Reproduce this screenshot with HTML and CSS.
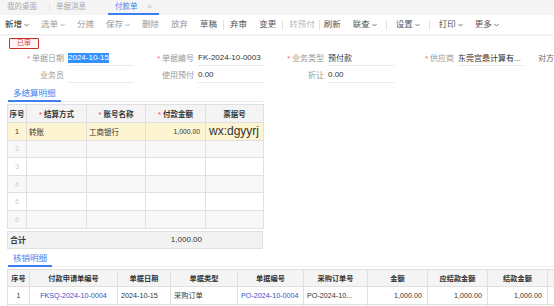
FILE: index.html
```html
<!DOCTYPE html>
<html lang="zh-CN">
<head>
    <meta charset="UTF-8">
    <meta name="viewport" content="width=device-width, initial-scale=1.0">
    <title>付款单</title>
    <link rel="stylesheet" href="styles.css">
</head>
<body>
    <div class="tabs">
        <div class="tab first">我的桌面</div>
        <span class="tab-sep"></span>
        <div class="tab">单据消息</div>
        <div class="tab active">付款单<span class="close">×</span></div>
    </div>

    <div class="toolbar">
        <div class="tool main">新增<svg class="arrow" width="5" height="4" viewBox="0 0 5 4"><polyline points="0.5,1 2.5,3 4.5,1"/></svg></div>
        <div class="tool off">选单<svg class="arrow" width="5" height="4" viewBox="0 0 5 4"><polyline points="0.5,1 2.5,3 4.5,1"/></svg></div>
        <div class="tool off">分摊</div>
        <div class="tool off">保存<svg class="arrow" width="5" height="4" viewBox="0 0 5 4"><polyline points="0.5,1 2.5,3 4.5,1"/></svg></div>
        <div class="tool off">删除</div>
        <div class="tool off">放弃</div>
        <div class="tool">草稿</div>
        <span class="sep"></span>
        <div class="tool">弃审</div>
        <div class="tool">变更</div>
        <span class="sep"></span>
        <div class="tool dim">转预付</div>
        <span class="sep tight"></span>
        <div class="tool">刷新</div>
        <div class="tool">联查<svg class="arrow" width="5" height="4" viewBox="0 0 5 4"><polyline points="0.5,1 2.5,3 4.5,1"/></svg></div>
        <span class="sep wide"></span>
        <div class="tool">设置<svg class="arrow" width="5" height="4" viewBox="0 0 5 4"><polyline points="0.5,1 2.5,3 4.5,1"/></svg></div>
        <span class="sep wide"></span>
        <div class="tool">打印<svg class="arrow" width="5" height="4" viewBox="0 0 5 4"><polyline points="0.5,1 2.5,3 4.5,1"/></svg></div>
        <div class="tool">更多<svg class="arrow" width="5" height="4" viewBox="0 0 5 4"><polyline points="0.5,1 2.5,3 4.5,1"/></svg></div>
    </div>

    <div class="status">
        <span class="stamp">已审</span>
    </div>

    <div class="form">
        <div class="form-row">
            <div class="field"><span class="label"><i class="req">*</i>单据日期</span><span class="value"><span class="sel">2024-10-15</span></span></div>
            <div class="field"><span class="label"><i class="req">*</i>单据编号</span><span class="value">FK-2024-10-0003</span></div>
            <div class="field"><span class="label"><i class="req">*</i>业务类型</span><span class="value">预付款</span></div>
            <div class="field"><span class="label"><i class="req">*</i>供应商</span><span class="value">东莞宫鼎计算有...</span></div>
            <div class="field last"><span class="label">对方</span></div>
        </div>
        <div class="form-row">
            <div class="field"><span class="label">业务员</span><span class="value"></span></div>
            <div class="field"><span class="label">使用预付</span><span class="value">0.00</span></div>
            <div class="field"><span class="label">折让</span><span class="value">0.00</span></div>
        </div>
    </div>

    <div class="section">
        <span class="section-tab">多结算明细</span>
    </div>

    <table class="grid settle">
        <colgroup>
            <col style="width:19px">
            <col style="width:60px">
            <col style="width:59px">
            <col style="width:60px">
            <col style="width:58px">
        </colgroup>
        <thead>
            <tr>
                <th>序号</th>
                <th><i class="req">*</i>结算方式</th>
                <th><i class="req">*</i>账号名称</th>
                <th><i class="req">*</i>付款金额</th>
                <th>票据号</th>
            </tr>
        </thead>
        <tbody>
            <tr class="current">
                <td class="no">1</td>
                <td>转账</td>
                <td>工商银行</td>
                <td class="num small">1,000.00</td>
                <td class="bill">wx:dgyyrj</td>
            </tr>
            <tr><td class="no empty">2</td><td></td><td></td><td></td><td></td></tr>
            <tr><td class="no empty">3</td><td></td><td></td><td></td><td></td></tr>
            <tr><td class="no empty">4</td><td></td><td></td><td></td><td></td></tr>
            <tr><td class="no empty">5</td><td></td><td></td><td></td><td></td></tr>
            <tr><td class="no empty">6</td><td></td><td></td><td></td><td></td></tr>
        </tbody>
    </table>

    <div class="total">
        <span class="total-label">合计</span>
        <span class="total-value">1,000.00</span>
    </div>

    <div class="section full">
        <span class="section-tab">核销明细</span>
    </div>

    <table class="grid writeoff">
        <colgroup>
            <col style="width:22px">
            <col style="width:88px">
            <col style="width:53px">
            <col style="width:67px">
            <col style="width:66px">
            <col style="width:64px">
            <col style="width:60px">
            <col style="width:60px">
            <col style="width:60px">
            <col style="width:40px">
        </colgroup>
        <thead>
            <tr>
                <th>序号</th>
                <th>付款申请单编号</th>
                <th>单据日期</th>
                <th>单据类型</th>
                <th>单据编号</th>
                <th>采购订单号</th>
                <th>金额</th>
                <th>应结款金额</th>
                <th>结款金额</th>
                <th></th>
            </tr>
        </thead>
        <tbody>
            <tr>
                <td class="no">1</td>
                <td class="center"><a class="link">FKSQ-2024-10-0004</a></td>
                <td>2024-10-15</td>
                <td>采购订单</td>
                <td><a class="link">PO-2024-10-0004</a></td>
                <td>PO-2024-10...</td>
                <td class="num">1,000.00</td>
                <td class="num">1,000.00</td>
                <td class="num">1,000.00</td>
                <td></td>
            </tr>
            <tr><td></td><td></td><td></td><td></td><td></td><td></td><td></td><td></td><td></td><td></td></tr>
        </tbody>
    </table>
</body>
</html>
```

FILE: styles.css
```css
* {
    margin: 0;
    padding: 0;
    box-sizing: border-box;
}

html,
body {
    overflow: hidden;
}

body {
    width: 554px;
    height: 306px;
    font-family: "Liberation Sans", "Noto Sans CJK SC", sans-serif;
    font-size: 8px;
    color: #333;
    background-color: #fff;
}

i {
    font-style: normal;
}

/* tabs */
.tabs {
    display: flex;
    align-items: flex-start;
    height: 15px;
    background-color: #f5f5f5;
}

.tab {
    font-size: 7.5px;
    line-height: 13px;
    color: #aaa;
    white-space: nowrap;
}

.tab.first {
    width: 49px;
    padding-left: 7px;
}

.tab-sep {
    width: 1px;
    height: 8px;
    margin-top: 3px;
    background-color: #e2e2e2;
}

.tab:nth-child(3) {
    width: 52px;
    padding-left: 6px;
}

.tab.active {
    margin-left: 6px;
    padding: 0 7px;
    color: #3d7ff0;
    border-bottom: 2px solid #3d7ff0;
}

.tab .close {
    margin-left: 10px;
    color: #bbb;
}

/* toolbar */
.toolbar {
    position: relative;
    display: flex;
    align-items: center;
    height: 19px;
    background-color: #fff;
    box-shadow: 0 1px 2px rgba(0, 0, 0, 0.1);
    font-size: 8.5px;
}

.tool {
    display: flex;
    align-items: center;
    gap: 2px;
    padding: 0 6px;
    line-height: 19px;
    color: #555;
    white-space: nowrap;
}

.tool.main {
    padding-left: 5px;
    color: #222;
}

.tool.off {
    color: #999;
}

.tool.dim {
    color: #bbb;
}

.arrow polyline {
    fill: none;
    stroke: #777;
    stroke-width: 1;
}

.tool.off .arrow polyline {
    stroke: #aaa;
}

.sep {
    width: 1px;
    height: 10px;
    background-color: #e3e3e3;
}

.sep.tight {
    margin: 0 -2px;
}

.sep.wide {
    margin: 0 3px;
}

/* status stamp */
.status {
    height: 15px;
    padding: 4px 0 0 9px;
}

.stamp {
    display: block;
    width: 30px;
    height: 11px;
    border: 1.5px solid #c9302c;
    border-radius: 1px;
    background-color: #fff3f3;
    color: #e2403a;
    font-size: 7px;
    line-height: 8px;
    text-align: center;
}

/* form */
.form {
    padding-left: 4px;
}

.form-row {
    display: flex;
    height: 17px;
}

.field {
    display: flex;
    align-items: center;
    flex-shrink: 0;
    width: 130px;
    height: 100%;
}

.field.last {
    width: 30px;
    padding-left: 14px;
}

.label {
    width: 64px;
    padding-right: 4px;
    text-align: right;
    color: #999;
    white-space: nowrap;
}

.field.last .label {
    width: auto;
    padding: 0;
    color: #666;
}

.req {
    margin-right: 2px;
    color: #f56c6c;
}

.value {
    display: flex;
    align-items: center;
    width: 66px;
    height: 100%;
    padding-top: 1px;
    border-bottom: 1px solid #ececec;
    color: #333;
    white-space: nowrap;
    overflow: hidden;
}

.sel {
    background-color: #3390ff;
    color: #fff;
    line-height: 10px;
}

/* section tabs */
.section {
    display: flex;
    width: 255px;
    margin: 3px 0 0 8px;
    border-bottom: 1px solid #e8e8e8;
}

.section.full {
    width: auto;
    margin-top: 2px;
    border-bottom-color: #f2f2f2;
}

.section-tab {
    padding: 0 5px;
    margin-bottom: -1px;
    font-size: 8.5px;
    line-height: 14px;
    color: #3d7ff0;
    border-bottom: 2px solid #3d7ff0;
}

/* grids */
.grid {
    margin: 2px 0 0 7px;
    border-collapse: collapse;
    table-layout: fixed;
}

.grid th,
.grid td {
    border: 1px solid #e0e0e0;
    white-space: nowrap;
    overflow: hidden;
    text-overflow: ellipsis;
}

.grid th {
    background-color: #f4f4f4;
    font-weight: bold;
    color: #333;
    text-align: center;
}

.settle {
    width: 256px;
}

.settle th {
    height: 18px;
    font-size: 7.5px;
}

.settle td {
    height: 17.6px;
    padding: 0 2px;
    font-size: 7.5px;
}

.settle tbody tr:nth-child(even) td {
    background-color: #f8f8f8;
}

.settle tr.current td {
    background-color: #fdf4d2;
}

.grid td.no {
    text-align: center;
    font-size: 7px;
}

.grid td.empty {
    color: #ccc;
}

.grid td.num {
    text-align: right;
    padding-right: 5px;
}

.settle td.small {
    font-size: 6.8px;
}

.settle td.bill {
    padding-left: 3px;
    font-size: 12px;
    color: #333;
}

/* total */
.total {
    display: grid;
    grid-template-columns: 137px 60px 58px;
    align-items: center;
    width: 256px;
    height: 18px;
    margin: 2px 0 0 7px;
    border: 1px solid #e0e0e0;
    background-color: #f2f2f2;
}

.total-label {
    padding-left: 2px;
    font-weight: bold;
    font-size: 8px;
}

.total-value {
    padding-right: 3px;
    text-align: right;
    font-size: 8px;
}

/* write-off grid */
.writeoff {
    width: 580px;
}

.writeoff th {
    height: 17px;
    font-size: 7.2px;
}

.writeoff td {
    height: 18px;
    padding: 0 3px;
    font-size: 7.2px;
}

.writeoff td.center {
    text-align: center;
}

.link {
    color: #3a4fc7;
}
```
